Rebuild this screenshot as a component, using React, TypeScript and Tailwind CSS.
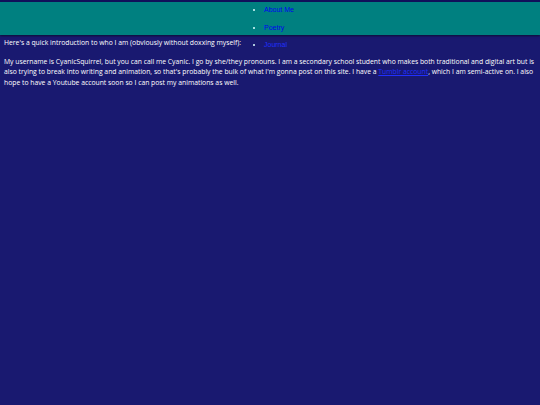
export default function App() {
  const body = "font-['Comic_Sans_MS','Open_Sans',sans-serif]"

  return (
    <div className="min-h-[405px] bg-[#191970] text-white antialiased">
      <header className="h-[35px] border-t-2 border-[#10105a] bg-[#008080] shadow-[0_1px_2px_rgba(0,0,0,0.5)] relative">
        <ul className="pl-[264px] -mt-[1px] list-disc marker:text-[#dff] font-['Liberation_Sans',Arial,sans-serif] text-[7px] leading-[17.5px] text-[#0000f0]">
          <li><a href="#">About Me</a></li>
          <li><a href="#">Poetry</a></li>
          <li><a href="#" className="text-[#2030ff]">Journal</a></li>
        </ul>
      </header>

      <main className={`${body} pl-[4px] pr-[2px] text-[6.8px] leading-[10.5px]`}>
        <p className="pt-[3px]">Here's a quick introduction to who I am (obviously without doxxing myself):</p>
        <p className="mt-[8px]">
          My username is CyanicSquirrel, but you can call me Cyanic. I go by she/they pronouns. I am a secondary school student who makes both traditional and digital art but is also trying to break into writing and animation, so that's probably the bulk of what I'm gonna post on this site. I have a{" "}
          <a href="#" className="text-[#2030ff] underline">Tumblr account</a>, which I am semi-active on. I also hope to have a Youtube account soon so I can post my animations as well.
        </p>
      </main>
    </div>
  )
}
